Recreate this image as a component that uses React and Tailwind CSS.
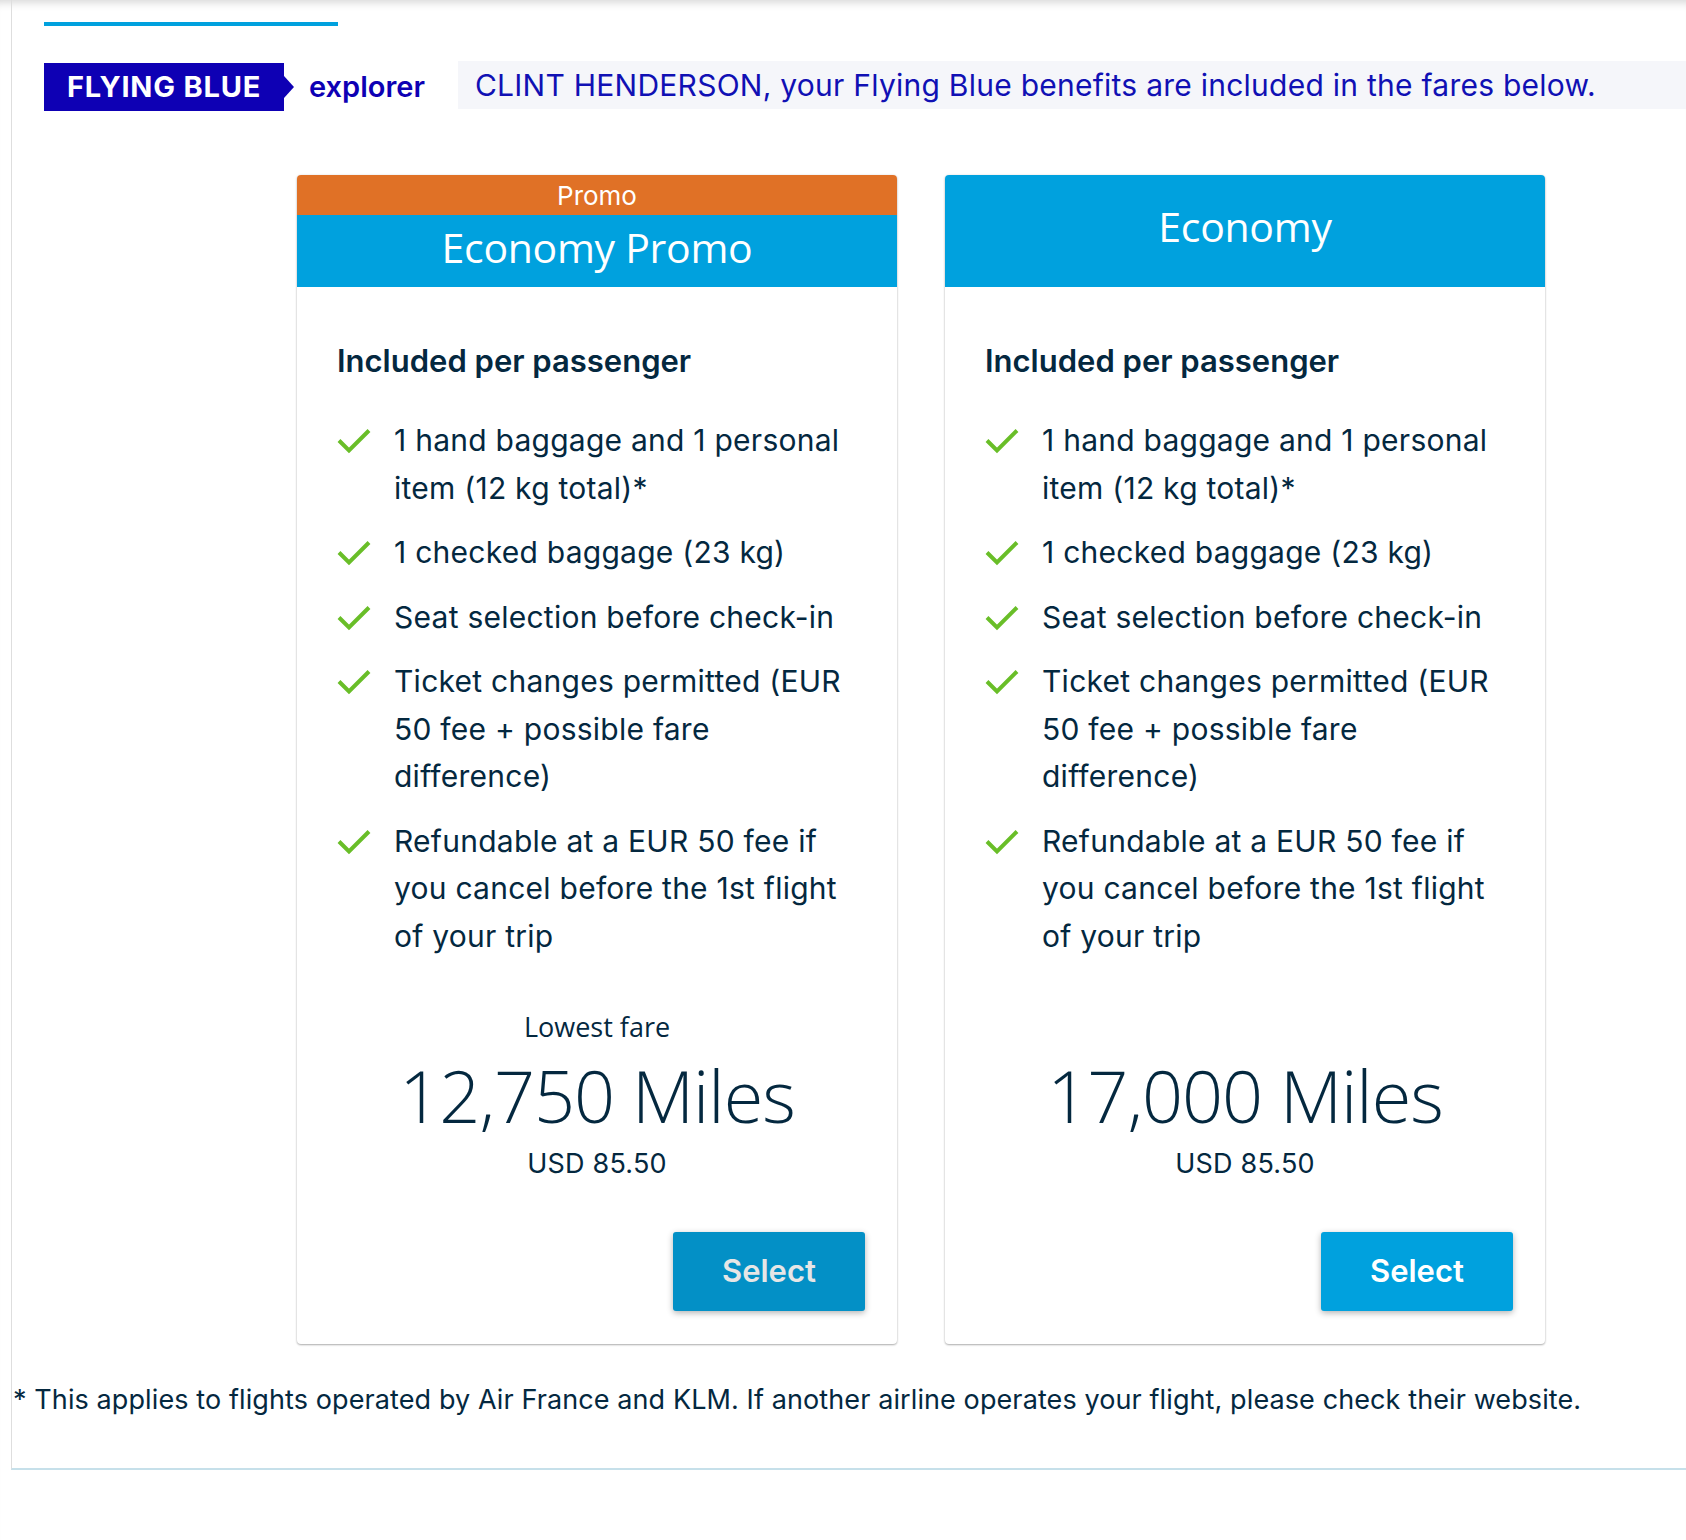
import React from 'react';

const features = [
  '1 hand baggage and 1 personal item (12 kg total)*',
  '1 checked baggage (23 kg)',
  'Seat selection before check-in',
  'Ticket changes permitted (EUR 50 fee + possible fare difference)',
  'Refundable at a EUR 50 fee if you cancel before the 1st flight of your trip',
];

const CheckIcon = () => (
  <svg width="34" height="26" viewBox="0 0 34 26" className="shrink-0 mt-[11px]">
    <path d="M2 12.5 L12 22.5 L32 2.5" fill="none" stroke="#69be28" strokeWidth="4" />
  </svg>
);

const FareCard = ({ promo, title, miles, lowest, dark }) => (
  <div className="w-[600px] rounded-[4px] bg-white overflow-hidden shadow-[0_1px_2px_rgba(0,0,0,0.3),0_0_3px_rgba(0,0,0,0.08)]">
    {/* Header */}
    {promo ? (
      <>
        <div className="h-[40px] bg-[#e07126] flex items-center justify-center text-white text-[26px]">
          Promo
        </div>
        <div className="h-[72px] bg-[#00a1de] flex items-center justify-center pb-[6px] text-white text-[41px] font-['Open_Sans',sans-serif] tracking-[-0.3px]">
          {title}
        </div>
      </>
    ) : (
      <div className="h-[112px] bg-[#00a1de] flex items-center justify-center pb-[8px] text-white text-[41px] font-['Open_Sans',sans-serif] tracking-[-0.3px]">
        {title}
      </div>
    )}

    {/* Body */}
    <div className="px-10 pt-[56px] text-[#04283f]">
      <h3 className="text-[31px] leading-[36px] font-semibold">Included per passenger</h3>
      <ul className="mt-[38px] space-y-[17px]">
        {features.map((f) => (
          <li key={f} className="flex">
            <CheckIcon />
            <span className="ml-[23px] text-[30px] leading-[47.5px] tracking-[0.25px]">{f}</span>
          </li>
        ))}
      </ul>

      <div className="flex flex-col items-center">
        <div className={`mt-[49px] text-[27px] leading-[36px] font-['Open_Sans',sans-serif] ${lowest ? '' : 'invisible'}`}>
          Lowest fare
        </div>
        <div className="mt-[5px] text-[72px] leading-[90px] font-light font-['Open_Sans',sans-serif] tracking-[-1px]">
          {miles} Miles
        </div>
        <div className="mt-[6px] text-[27px] leading-[36px] tracking-[0.2px]">USD 85.50</div>
      </div>

      <div className="mt-[50px] mr-[-8px] pb-[33px] flex justify-end">
        <button
          className={`w-[192px] h-[79px] rounded-[3px] text-[31px] font-semibold shadow-[0_2px_6px_rgba(0,0,0,0.3)] ${
            dark ? 'bg-[#0390c6] text-[#e6e6e6]' : 'bg-[#00a1de] text-white'
          }`}
        >
          Select
        </button>
      </div>
    </div>
  </div>
);

const App = () => {
  return (
    <div className="min-h-[1540px] bg-white font-['Inter',sans-serif] shadow-[inset_0_10px_10px_-8px_rgba(0,0,0,0.18)]">
      <div className="ml-[11px] border-l border-[#dedede] border-b-2 border-b-[#c6e0ea]">
        {/* Top accent line */}
        <div className="pl-[32px] pt-[22px]">
          <div className="h-[4px] w-[294px] bg-[#00a1de]" />
        </div>

        {/* Flying Blue banner */}
        <div className="mt-[35px] pl-[32px] flex items-center">
          <div className="relative h-[48px] w-[240px] bg-[#0e00b4] flex items-center justify-center">
            <span className="text-white text-[29px] font-bold tracking-[0.8px]">FLYING BLUE</span>
            <span className="absolute left-full top-1/2 -translate-y-1/2 w-0 h-0 border-y-[11px] border-y-transparent border-l-[10px] border-l-[#0e00b4]" />
          </div>
          <span className="ml-[25px] text-[29px] font-semibold text-[#0e00b4]">explorer</span>
          <div className="ml-[33px] mb-[4px] flex-1 h-[48px] bg-[#f5f6fa] flex items-center pl-[17px] text-[30px] tracking-[0.25px] text-[#1010b4]">
            CLINT HENDERSON, your Flying Blue benefits are included in the fares below.
          </div>
        </div>

        {/* Fare cards */}
        <div className="mt-[62px] ml-[285px] flex gap-12">
          <FareCard promo title="Economy Promo" miles="12,750" lowest dark />
          <FareCard title="Economy" miles="17,000" />
        </div>

        {/* Footnote */}
        <p className="mt-[38px] pl-[1px] pb-[50px] text-[27px] leading-[36px] tracking-[0.1px] text-[#04283f]">
          * This applies to flights operated by Air France and KLM. If another airline operates your flight, please check their website.
        </p>
      </div>
    </div>
  );
};

export default App;
